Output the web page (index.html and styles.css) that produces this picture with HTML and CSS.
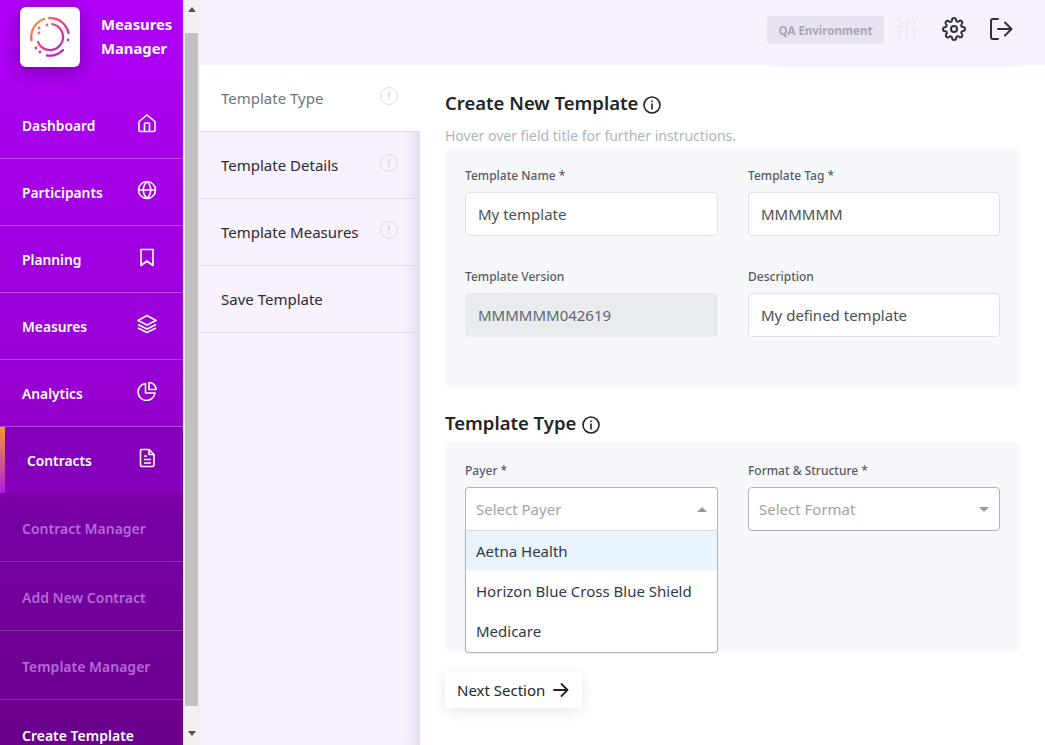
FILE: index.html
```html
<!DOCTYPE html>
<html lang="en">
<head>
<meta charset="UTF-8">
<title>Measures Manager</title>
<link rel="stylesheet" href="styles.css">
</head>
<body>
<div class="app">
	<nav class="sidebar">
		<div class="brand">
			<div class="logo">
				<svg width="42" height="42" viewBox="0 0 42 42" fill="none" stroke-linecap="round">
					<defs>
						<linearGradient id="lg" gradientUnits="userSpaceOnUse" x1="3" y1="5" x2="36" y2="38">
							<stop offset="0" stop-color="#f79a2c"/>
							<stop offset="0.45" stop-color="#e4468a"/>
							<stop offset="1" stop-color="#b812d8"/>
						</linearGradient>
					</defs>
					<g stroke="url(#lg)" stroke-width="2.300">
						<path d="M2.500 24A19 19 0 0 1 15 3"/>
						<path d="M20 2A19 19 0 0 1 39.500 17"/>
						<path d="M34 34A19 19 0 0 1 18 39.500"/>
						<path d="M23 8.200A13 13 0 1 1 9 26"/>
					</g>
					<g fill="#d9359c">
						<circle cx="10" cy="12" r="1.400" fill="#ee6d55"/>
						<circle cx="18" cy="9" r="1.400" fill="#ee6d55"/>
						<circle cx="10" cy="17" r="1.400" fill="#ee6d55"/>
						<circle cx="39" cy="24" r="1.400"/>
						<circle cx="7" cy="32" r="1.400"/>
						<circle cx="11" cy="36" r="1.400"/>
					</g>
				</svg>
			</div>
			<div class="brand-name">Measures<br>Manager</div>
		</div>
		<a class="nav-item">Dashboard
			<svg class="nav-icon" viewBox="0 0 20 20"><path d="M2 8.500 10 2l8 6.500V17a1.500 1.500 0 0 1-1.500 1.500h-13A1.500 1.500 0 0 1 2 17z"/><path d="M7.500 18.500V11a1 1 0 0 1 1-1h3a1 1 0 0 1 1 1v7.500"/></svg>
		</a>
		<a class="nav-item">Participants
			<svg class="nav-icon" viewBox="0 0 20 20"><circle cx="10" cy="10" r="8.500"/><path d="M1.500 10h17M10 1.500c-5 5-5 12 0 17M10 1.500c5 5 5 12 0 17"/></svg>
		</a>
		<a class="nav-item">Planning
			<svg class="nav-icon" viewBox="0 0 20 20"><path d="M4 2.500h12v16l-6-4.500-6 4.500z" stroke-linejoin="round"/></svg>
		</a>
		<a class="nav-item">Measures
			<svg class="nav-icon" viewBox="0 0 20 20"><path d="M10 1.500 19 6.500 10 11 1 6.500z"/><path d="M1 10.500l9 4.500 9-4.500M1 14l9 4.500 9-4.500"/></svg>
		</a>
		<a class="nav-item">Analytics
			<svg class="nav-icon" viewBox="0 0 20 20"><path d="M8.500 2.500a8.500 8.500 0 1 0 9.500 9.500h-9.500z"/><path d="M12 1.500a7 7 0 0 1 7 7h-7z"/></svg>
		</a>
		<a class="nav-item nav-active">Contracts
			<svg class="nav-icon" viewBox="0 0 20 20"><path d="M3.500 3a1.500 1.500 0 0 1 1.500-1.500h7l5 5V17a1.500 1.500 0 0 1-1.500 1.500H5A1.500 1.500 0 0 1 3.500 17z"/><path d="M12 1.500V6.500h5M7 8h3M7 11.500h7M7 15h7"/></svg>
		</a>
		<a class="sub-item">Contract Manager</a>
		<a class="sub-item">Add New Contract</a>
		<a class="sub-item">Template Manager</a>
		<a class="sub-item sub-current">Create Template</a>
	</nav>

	<div class="scrollbar">
		<div class="arrow-up"></div>
		<div class="thumb"></div>
		<div class="arrow-down"></div>
	</div>

	<div class="main">
		<header class="topbar">
			<span class="env">QA Environment</span>
			<svg class="top-icon faded" viewBox="0 0 26 26"><path d="M5 2v7M5 13v11M13 2v3M13 9v15M21 2v11M21 17v7M1 11h8M9 7h8M17 15h8"/></svg>
			<svg class="top-icon" viewBox="0 0 24 24"><circle cx="12" cy="12" r="3"/><path d="M19.400 15a1.650 1.650 0 0 0 .33 1.820l.06.06a2 2 0 1 1-2.830 2.830l-.06-.06a1.650 1.650 0 0 0-2.800 1.170V21a2 2 0 0 1-4 0v-.09a1.650 1.650 0 0 0-2.820-1.110l-.06.06a2 2 0 1 1-2.830-2.830l.06-.06a1.650 1.650 0 0 0-1.170-2.800H3a2 2 0 0 1 0-4h.09A1.650 1.650 0 0 0 4.200 7.350l-.06-.06a2 2 0 1 1 2.830-2.830l.06.06a1.650 1.650 0 0 0 1.820.33H9a1.650 1.650 0 0 0 1-1.510V3a2 2 0 0 1 4 0v.09a1.650 1.650 0 0 0 2.800 1.170l.06-.06a2 2 0 1 1 2.830 2.830l-.06.06a1.650 1.650 0 0 0-.33 1.820V9a1.650 1.650 0 0 0 1.510 1H21a2 2 0 0 1 0 4h-.09a1.650 1.650 0 0 0-1.510 1z"/></svg>
			<svg class="top-icon" viewBox="0 0 24 24"><path d="M9 2H4a2 2 0 0 0-2 2v16a2 2 0 0 0 2 2h5M9 12h13M16 5.500l6.500 6.500-6.500 6.500"/></svg>
		</header>

		<div class="body-row">
			<aside class="steps">
				<div class="step step-on"><span>Template Type</span><i class="bang">!</i></div>
				<div class="step"><span>Template Details</span><i class="bang">!</i></div>
				<div class="step"><span>Template Measures</span><i class="bang">!</i></div>
				<div class="step"><span>Save Template</span></div>
			</aside>

			<section class="content">
				<h2 class="title first">Create New Template
					<svg class="info" viewBox="0 0 18 18"><circle cx="9" cy="9" r="8"/><path d="M9 8v5M9 5v.5"/></svg>
				</h2>
				<p class="hint">Hover over field title for further instructions.</p>

				<div class="panel panel-top">
					<div class="field">
						<label>Template Name *</label>
						<div class="input">My template</div>
					</div>
					<div class="field">
						<label>Template Tag *</label>
						<div class="input">MMMMMM</div>
					</div>
					<div class="field">
						<label>Template Version</label>
						<div class="input input-off">MMMMMM042619</div>
					</div>
					<div class="field">
						<label>Description</label>
						<div class="input">My defined template</div>
					</div>
				</div>

				<h2 class="title second">Template Type
					<svg class="info" viewBox="0 0 18 18"><circle cx="9" cy="9" r="8"/><path d="M9 8v5M9 5v.5"/></svg>
				</h2>

				<div class="panel panel-type">
					<div class="field">
						<label>Payer *</label>
						<div class="select select-open">
							<span>Select Payer</span><b class="caret caret-up"></b>
						</div>
						<ul class="menu">
							<li class="menu-hover">Aetna Health</li>
							<li>Horizon Blue Cross Blue Shield</li>
							<li>Medicare</li>
						</ul>
					</div>
					<div class="field">
						<label>Format &amp; Structure *</label>
						<div class="select">
							<span>Select Format</span><b class="caret"></b>
						</div>
					</div>
				</div>

				<button class="next">Next Section
					<svg width="16" height="14" viewBox="0 0 16 14"><path d="M1 7h13.500M8.500 1l6 6-6 6"/></svg>
				</button>
			</section>
		</div>
	</div>
</div>
</body>
</html>
```

FILE: styles.css
```css
* {
	box-sizing: border-box;
}
html, body {
	margin: 0;
	padding: 0;
	height: 100%;
	overflow: hidden;
}
body {
	font-family: "Noto Sans", "Open Sans", sans-serif;
	color: #212529;
	background: #fff;
}
.app {
	display: flex;
	height: 745px;
}

/* sidebar */
.sidebar {
	width: 183px;
	height: 745px;
	flex: none;
	overflow: hidden;
	background: linear-gradient(180deg, #b000f8 0%, #9a00d8 45%, #7a00a0 100%);
}
.brand {
	display: flex;
	height: 92px;
	padding: 7px 0 0 20px;
}
.logo {
	width: 60px;
	height: 60px;
	display: flex;
	align-items: center;
	justify-content: center;
	background: #fff;
	border-radius: 6px;
	box-shadow: 0 4px 16px rgba(60, 0, 90, 0.45);
}
.brand-name {
	margin-left: 21px;
	padding-top: 5px;
	font-size: 14.800px;
	font-weight: 700;
	line-height: 24px;
	color: #fff;
}
.nav-item {
	display: flex;
	align-items: center;
	justify-content: space-between;
	height: 67px;
	padding: 0 26px 0 22px;
	font-size: 13.800px;
	font-weight: 600;
	color: #fff;
	border-bottom: 1px solid rgba(255, 255, 255, 0.28);
}
.nav-icon {
	width: 20px;
	height: 20px;
	margin-top: -4px;
	fill: none;
	stroke: #fff;
	stroke-width: 1.600;
	stroke-linejoin: round;
}
.nav-active {
	position: relative;
	height: 66px;
	padding-left: 27px;
	border-bottom: 0;
	background: #8500bb;
}
.nav-active::before {
	content: "";
	position: absolute;
	left: 0;
	top: 0;
	bottom: 0;
	width: 5px;
	background: linear-gradient(180deg, #f39a33, #b41ae0);
}
.sub-item {
	display: flex;
	align-items: center;
	height: 69px;
	padding: 2px 0 0 22px;
	font-size: 14px;
	font-weight: 600;
	color: #b36ad6;
	border-bottom: 1px solid rgba(255, 255, 255, 0.18);
	background: rgba(60, 0, 80, 0.25);
}
.sub-current {
	color: #fff;
	border-bottom: 0;
}

/* page scrollbar */
.scrollbar {
	width: 17px;
	flex: none;
	display: flex;
	flex-direction: column;
	align-items: center;
	background: #f1f1f1;
}
.arrow-up, .arrow-down {
	width: 0;
	height: 0;
	border-left: 4px solid transparent;
	border-right: 4px solid transparent;
}
.arrow-up {
	margin: 7px 0 21px;
	border-bottom: 5px solid #505050;
}
.arrow-down {
	margin-top: 25px;
	border-top: 5px solid #505050;
}
.thumb {
	width: 13px;
	height: 673px;
	background: #c1c1c1;
}

/* top bar */
.main {
	flex: 1;
	min-width: 0;
	display: flex;
	flex-direction: column;
}
.topbar {
	position: relative;
	z-index: 1;
	height: 65px;
	flex: none;
	display: flex;
	align-items: center;
	padding: 0 32px 8px 0;
	justify-content: flex-end;
	background: #f8f2ff;
}
.topbar::after {
	content: "";
	position: absolute;
	left: 568px;
	right: 22px;
	bottom: -2px;
	height: 12px;
	background: #f8f2ff;
	border-radius: 0 0 8px 8px;
}
.env {
	width: 117px;
	height: 28px;
	margin: 3px 10px 0 0;
	padding-top: 1px;
	display: flex;
	align-items: center;
	justify-content: center;
	font-size: 11.500px;
	font-weight: 700;
	color: #aba3b5;
	background: #e9e3ef;
	border-radius: 4px;
}
.top-icon {
	width: 24px;
	height: 24px;
	margin-left: 23px;
	fill: none;
	stroke: #33303b;
	stroke-width: 2;
	stroke-linecap: round;
	stroke-linejoin: round;
}
.top-icon.faded {
	width: 26px;
	margin: 0 -1px 0 0;
	stroke: #efe9f5;
}

.body-row {
	flex: 1;
	display: flex;
	min-height: 0;
}

/* steps column */
.steps {
	width: 220px;
	flex: none;
	background: #f7f2fd;
	box-shadow: inset -16px 0 16px -14px rgba(90, 40, 130, 0.2);
}
.step {
	display: flex;
	justify-content: space-between;
	height: 67px;
	padding: 23px 22px 0 21px;
	font-size: 15px;
	color: #2d2a33;
	border-bottom: 1px solid #e2d8ef;
}
.step-on {
	height: 67px;
	color: #6c757d;
	background: #fff;
}
.bang {
	width: 18px;
	height: 18px;
	margin-top: -1px;
	font-size: 11px;
	font-style: normal;
	font-weight: 700;
	line-height: 15px;
	text-align: center;
	color: #d8d8d8;
	border: 1.500px solid #dcdcdc;
	border-radius: 50%;
}

/* main form */
.content {
	flex: 1;
	padding: 0 25px;
	background: #fff;
}
.title {
	display: flex;
	align-items: center;
	gap: 5px;
	margin: 0;
	font-size: 18.500px;
	font-weight: 600;
	line-height: 26px;
	color: #212529;
}
.title.first {
	padding-top: 24px;
	height: 52px;
}
.title.second {
	height: 27px;
	margin-top: 20px;
	gap: 6px;
}
.info {
	width: 18px;
	height: 18px;
	margin-top: 4px;
	fill: none;
	stroke: #212529;
	stroke-width: 1.600;
	stroke-linecap: round;
}
.hint {
	margin: 9px 0 0;
	font-size: 14px;
	line-height: 19px;
	color: #adb5bd;
	height: 22px;
}
.panel {
	display: grid;
	grid-template-columns: 253px 252px;
	column-gap: 30px;
	padding: 20px 20px 0;
	background: #f7f8fb;
	border-radius: 8px;
}
.panel-top {
	height: 241px;
	row-gap: 33px;
	align-content: start;
}
.panel-type {
	position: relative;
	height: 210px;
	margin-top: 6px;
	padding-top: 21px;
}
.field label {
	display: block;
	font-size: 12px;
	font-weight: 500;
	line-height: 16px;
	color: #555b62;
	margin-bottom: 8px;
}
.input {
	height: 44px;
	padding: 0 12px;
	display: flex;
	align-items: center;
	font-size: 15px;
	color: #495057;
	background: #fff;
	border: 1px solid #dee2e6;
	border-radius: 4px;
}
.input-off {
	background: #e9ecef;
	border-color: #e9ecef;
	color: #5f666d;
}
.select {
	height: 44px;
	padding: 0 10px;
	display: flex;
	align-items: center;
	justify-content: space-between;
	font-size: 15px;
	color: #a3a3a3;
	background: #fff;
	border: 1px solid #b3b3b3;
	border-radius: 4px;
}
.select-open {
	border-color: #b3b3b3;
	border-bottom: 1px solid #dcdcdc;
	border-radius: 4px 4px 0 0;
}
.caret {
	width: 0;
	height: 0;
	border-left: 5px solid transparent;
	border-right: 5px solid transparent;
	border-top: 5px solid #999;
}
.caret-up {
	border-top: 0;
	border-bottom: 5px solid #999;
}
.menu {
	margin: 0;
	padding: 0 0 1px;
	list-style: none;
	font-size: 15px;
	background: #fff;
	color: #2f3a45;
	border: 1px solid #b3b3b3;
	border-top: 0;
	border-radius: 0 0 4px 4px;
	box-shadow: 0 1px 2px rgba(0, 0, 0, 0.1);
}
.menu li {
	height: 40px;
	padding: 0 10px;
	display: flex;
	align-items: center;
}
.menu-hover {
	background: #e9f4fe;
}
.next {
	display: flex;
	align-items: center;
	gap: 8px;
	height: 36px;
	margin-top: 20px;
	padding: 0 13px 0 12px;
	font: inherit;
	font-size: 15px;
	color: #212529;
	background: #fff;
	border: 0;
	border-radius: 4px;
	box-shadow: 0 3px 14px rgba(0, 0, 0, 0.1);
}
.next svg {
	fill: none;
	stroke: #212529;
	stroke-width: 1.800;
	stroke-linecap: round;
	stroke-linejoin: round;
}
```
